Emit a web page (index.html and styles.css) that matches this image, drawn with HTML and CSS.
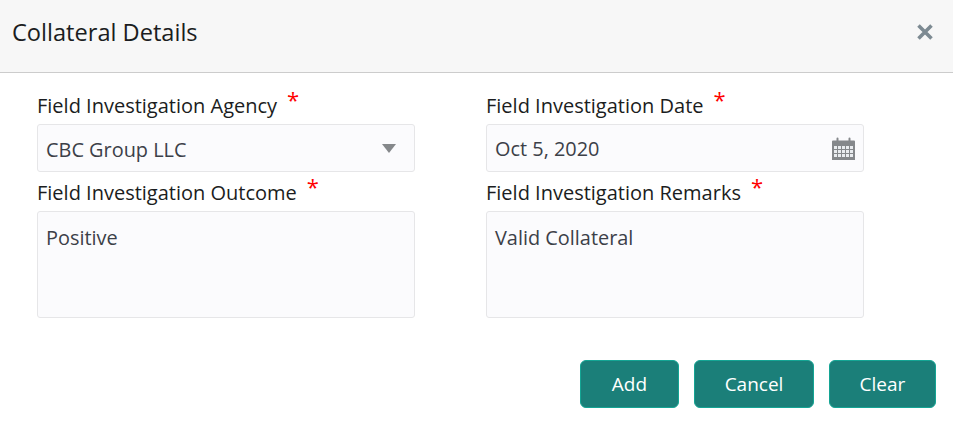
FILE: index.html
```html
<!DOCTYPE html>
<html lang="en">
<head>
<meta charset="utf-8">
<title>Collateral Details</title>
<link rel="stylesheet" href="styles.css">
</head>
<body>
<header class="header">
  <h1 class="title">Collateral Details</h1>
  <button class="close" aria-label="Close">
    <svg width="18" height="18" viewBox="0 0 18 18"><path d="M2.500 2.500L15.500 15.500M15.500 2.500L2.500 15.500" stroke="#7d8a92" stroke-width="3.600" fill="none"/></svg>
  </button>
</header>
<main class="form">
  <div class="field">
    <label class="label">Field Investigation Agency<span class="req">*</span></label>
    <div class="control select"><span class="value value-low">CBC Group LLC</span>
      <svg class="caret" width="14" height="9" viewBox="0 0 14 9"><path d="M0 0H14L7 9Z" fill="#85888b"/></svg>
    </div>
  </div>
  <div class="field">
    <label class="label">Field Investigation Date<span class="req">*</span></label>
    <div class="control date"><span class="value">Oct 5, 2020</span>
      <svg class="cal" width="25" height="25" viewBox="0 0 25 25">
        <path d="M1 5.500a1 1 0 0 1 1-1h3.500V2.500a1 1 0 0 1 2 0v2h10v-2a1 1 0 0 1 2 0v2H23a1 1 0 0 1 1 1V24H1Z" fill="#85888b"/>
        <g fill="#e9ecef">
          <rect x="3" y="10" width="3" height="3"/><rect x="7" y="10" width="3" height="3"/><rect x="11" y="10" width="3" height="3"/><rect x="15" y="10" width="3" height="3"/><rect x="19" y="10" width="3" height="3"/>
          <rect x="3" y="14" width="3" height="3"/><rect x="7" y="14" width="3" height="3"/><rect x="11" y="14" width="3" height="3"/><rect x="15" y="14" width="3" height="3"/><rect x="19" y="14" width="3" height="3"/>
          <rect x="3" y="18" width="3" height="3"/><rect x="7" y="18" width="3" height="3"/><rect x="11" y="18" width="3" height="3"/><rect x="15" y="18" width="3" height="3"/><rect x="19" y="18" width="3" height="3"/>
        </g>
      </svg>
    </div>
  </div>
  <div class="field">
    <label class="label">Field Investigation Outcome<span class="req">*</span></label>
    <div class="control area"><span class="value">Positive</span></div>
  </div>
  <div class="field">
    <label class="label">Field Investigation Remarks<span class="req">*</span></label>
    <div class="control area"><span class="value">Valid Collateral</span></div>
  </div>
</main>
<footer class="actions">
  <button class="btn btn-add">Add</button>
  <button class="btn btn-cancel">Cancel</button>
  <button class="btn btn-clear">Clear</button>
</footer>
</body>
</html>
```

FILE: styles.css
```css
* { box-sizing: border-box; }
html, body { margin: 0; padding: 0; }
body {
  width: 953px;
  height: 430px;
  overflow: hidden;
  background: #fff;
  font-family: "Open Sans", "Noto Sans", sans-serif;
  color: #1b1d21;
}
.header {
  height: 73px;
  background: #f7f7f7;
  border-bottom: 1px solid #ccc;
  display: flex;
  align-items: center;
  justify-content: space-between;
  padding: 0 19px 9px 12px;
}
.title { margin: 0; font-size: 23.6px; font-weight: 400; line-height: 30px; }
.close { border: 0; background: none; padding: 0; display: flex; }
.form {
  display: grid;
  grid-template-columns: 378px 378px;
  column-gap: 71px;
  padding: 20px 0 0 37px;
}
.field { display: flex; flex-direction: column; }
.label { height: 31px; font-size: 20px; line-height: 26px; white-space: nowrap; }
.req { color: #f00; font-size: 22px; line-height: 20px; margin-left: 10px; position: relative; top: -5px; }
.control {
  border: 1px solid #e6e6e8;
  border-radius: 3px;
  background: #fbfbfd;
  color: #3c4048;
  font-size: 19.900px;
  display: flex;
  padding: 0 8px;
  justify-content: space-between;
  align-items: center;
}
.select, .date { height: 48px; margin-bottom: 8px; }
.value-low { padding-top: 3px; }
.date .value { padding-top: 1px; }
.caret { margin-right: 10px; }
.cal { margin-right: -1px; }
.area { height: 107px; align-items: flex-start; padding-top: 12px; line-height: 28px; }
.actions {
  display: flex;
  justify-content: flex-end;
  gap: 15px;
  padding: 42px 17px 0 0;
}
.btn {
  height: 48px;
  border: 1px solid #14a594;
  border-radius: 6px;
  background: #1b7f79;
  color: #fff;
  font-family: inherit;
  font-size: 19px;
  padding: 0;
}
.btn-add { width: 99px; }
.btn-cancel { width: 120px; }
.btn-clear { width: 107px; }
```
